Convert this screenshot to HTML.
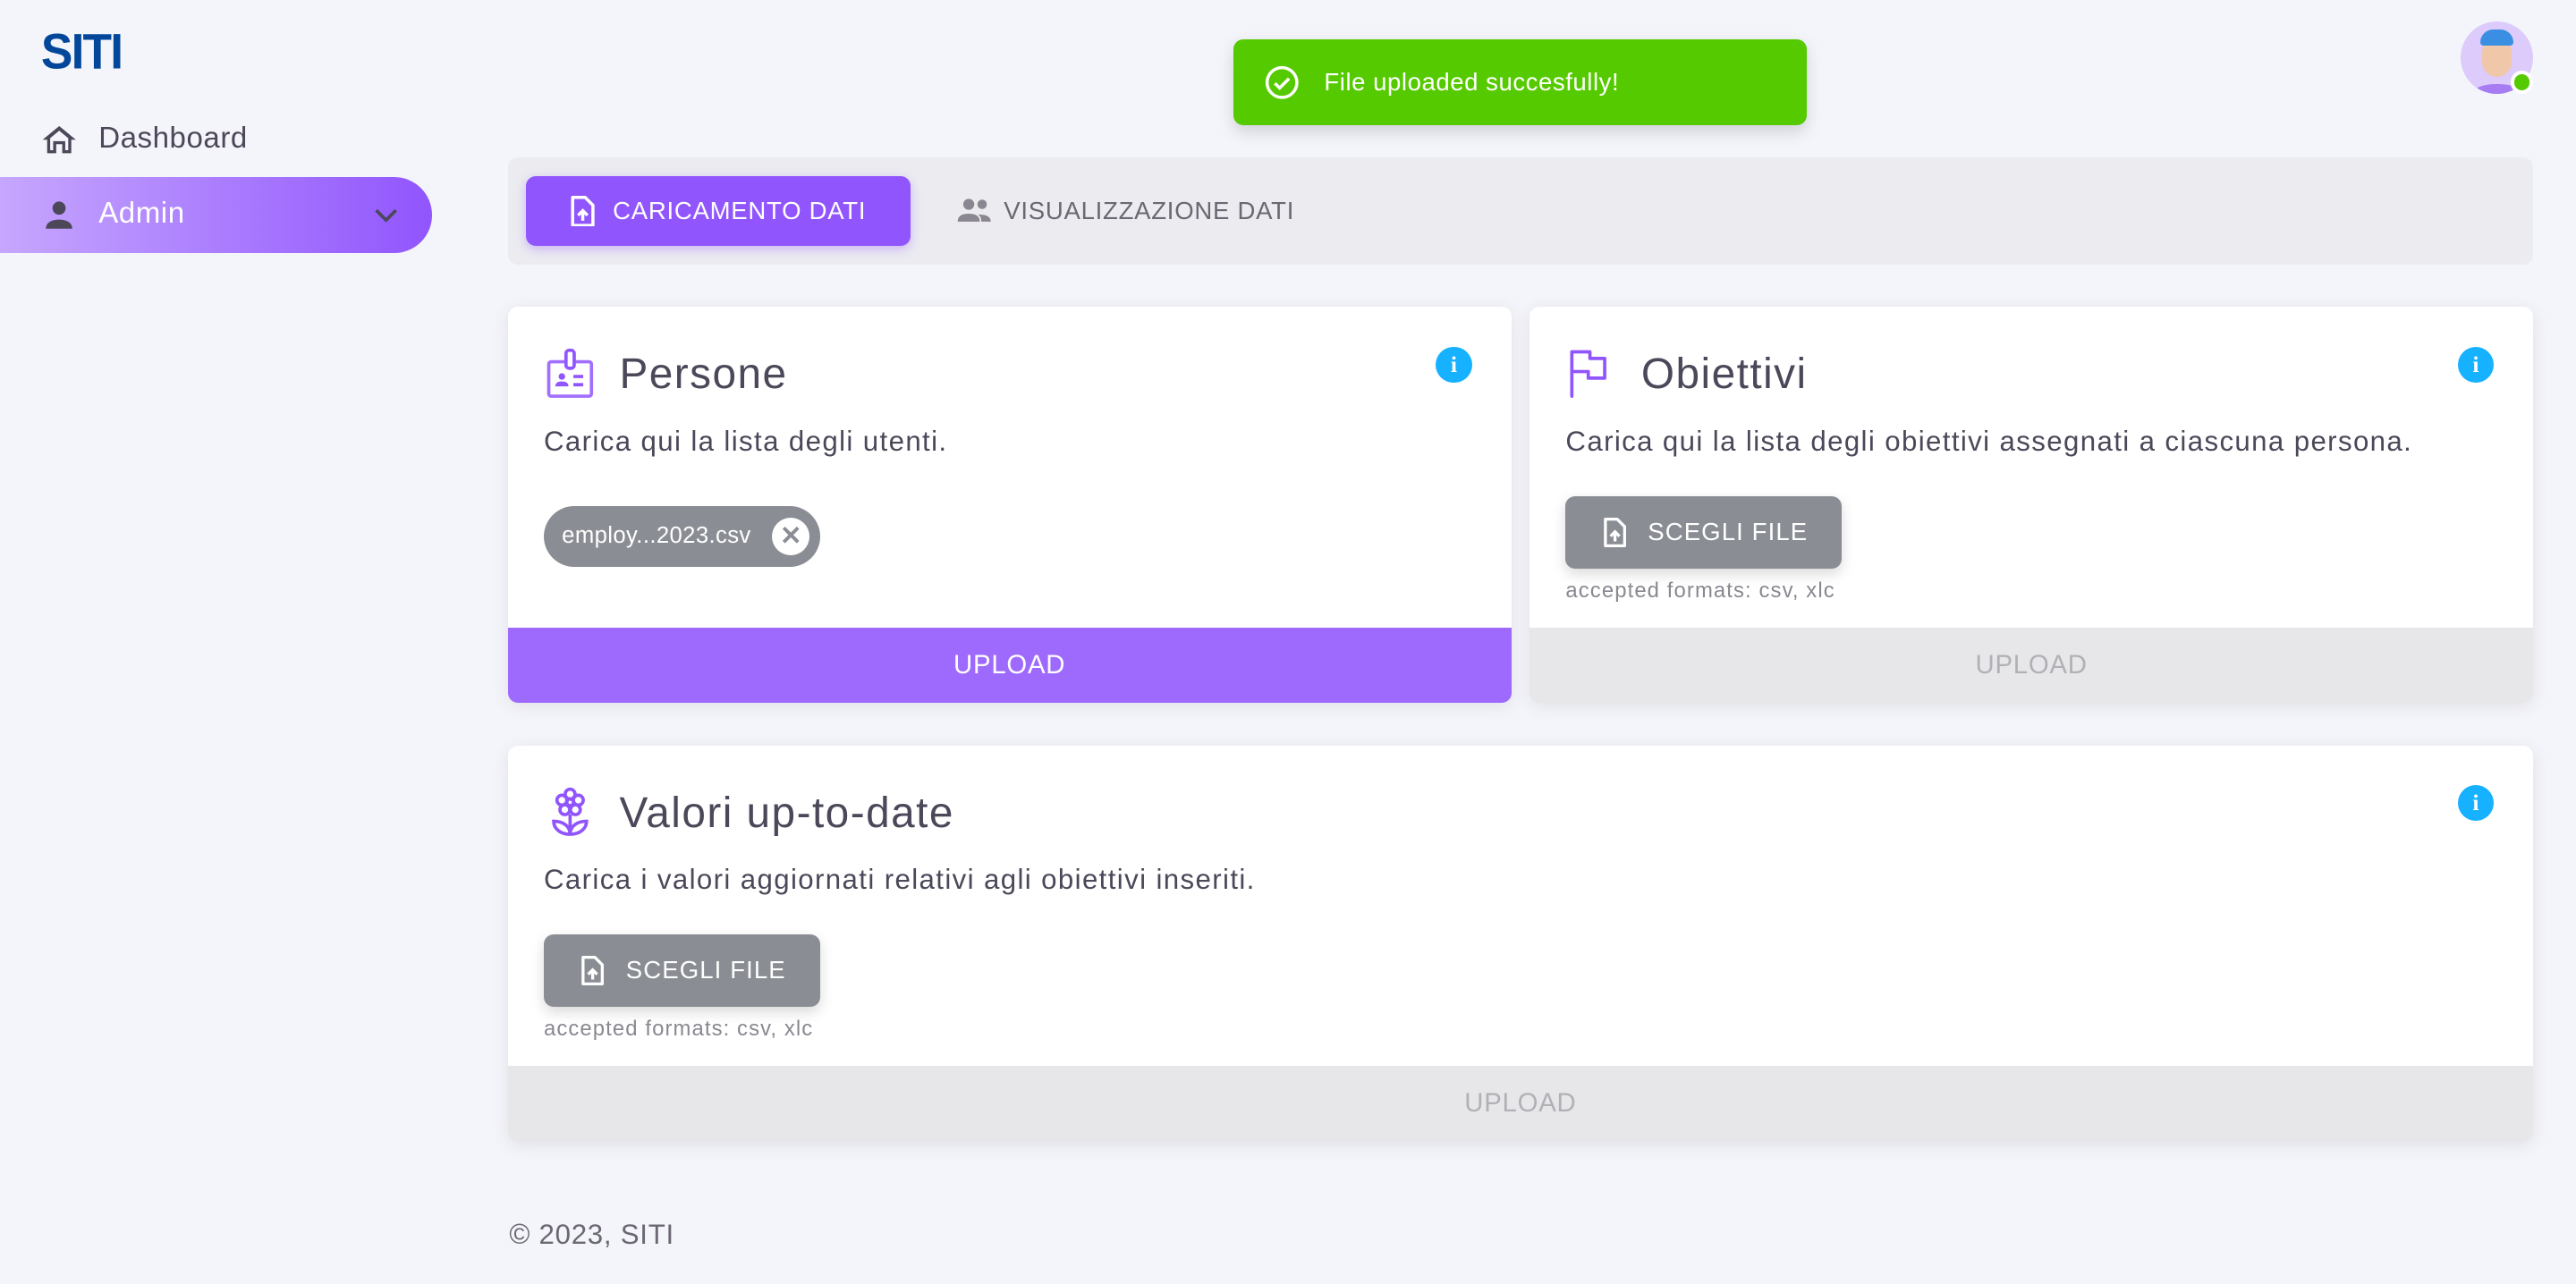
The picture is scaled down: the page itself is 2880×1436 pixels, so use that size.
<!DOCTYPE html>
<html><head><meta charset="utf-8"><style>
*{box-sizing:border-box;margin:0;padding:0}
html,body{width:2880px;height:1436px;overflow:hidden;background:#f4f5fa}
#w{zoom:1.836735;width:1568px;height:782px;position:relative;font-family:"Liberation Sans",sans-serif;color:#4c4759}
.abs{position:absolute}
.card{position:absolute;background:#fff;border-radius:6px;box-shadow:0 2px 10px rgba(58,53,65,.1);overflow:hidden}
.ttl{position:absolute;left:68px;top:26px;font-size:26px;color:#4c4759;letter-spacing:.8px}
.ico{position:absolute;left:22px;top:24px}
.desc{position:absolute;left:22px;top:72px;font-size:17px;color:#4c4759;letter-spacing:.75px}
.info{position:absolute;right:24px;top:24px;width:22px;height:22px;border-radius:50%;background:#16b1ff;color:#fff;font:bold 14px "Liberation Serif",serif;text-align:center;line-height:22px}
.up{position:absolute;left:0;right:0;bottom:0;height:46px;text-align:center;line-height:46px;font-size:16px;letter-spacing:.4px}
.btn{position:absolute;left:22px;top:115px;width:168px;height:44px;border-radius:6px;background:#8a8d93;color:#fff;font-size:15px;letter-spacing:.6px;box-shadow:0 3px 8px rgba(0,0,0,.15);line-height:44px;padding-left:50px}
.btn svg{position:absolute;left:22px;top:13px}
.acc{position:absolute;left:22px;top:165px;font-size:13px;color:#8a8790;letter-spacing:.6px}
</style></head><body><div id="w">
<div class="abs" style="left:25px;top:14px;font:900 29px 'Liberation Sans',sans-serif;color:#03479a;letter-spacing:-1px;transform:scaleY(1.05);transform-origin:top left">SITI</div>
<svg class="abs" style="left:25px;top:74px" width="22" height="22" viewBox="0 0 24 24"><path d="M12 3L1 12h3v9h6v-6h4v6h6v-9h3z M6 19v-8l6-5 6 5v8h-2v-6H8v6z" fill="#4c4759" fill-rule="evenodd"/></svg>
<div class="abs" style="left:60px;top:74px;font-size:18px;letter-spacing:.3px">Dashboard</div>
<div class="abs" style="left:0;top:108px;width:263px;height:46px;border-radius:0 23px 23px 0;background:linear-gradient(90deg,#c6a7fe,#9155fd)"></div>
<svg class="abs" style="left:24px;top:119px" width="24" height="24" viewBox="0 0 24 24"><circle cx="12" cy="7.5" r="4" fill="#4c4759"/><path d="M4 20c0-4 4-5.5 8-5.5s8 1.5 8 5.5z" fill="#4c4759"/></svg>
<div class="abs" style="left:60px;top:120px;font-size:18px;color:#fff;letter-spacing:.3px">Admin</div>
<svg class="abs" style="left:227px;top:123px" width="16" height="16" viewBox="0 0 16 16"><path d="M2 5l6 6 6-6" stroke="#4c4759" stroke-width="2" fill="none"/></svg>
<div class="abs" style="left:751px;top:24px;width:349px;height:52px;border-radius:6px;background:#56ca00;box-shadow:0 4px 10px rgba(0,0,0,.15);color:#fff;font-size:15px;line-height:52px;padding-left:55px;letter-spacing:.3px">File uploaded succesfully!
<svg class="abs" style="left:19px;top:16px" width="21" height="21" viewBox="0 0 22 22"><circle cx="11" cy="11" r="9.5" stroke="#fff" stroke-width="2" fill="none"/><path d="M6.5 11.5l3 3 6-6" stroke="#fff" stroke-width="2" fill="none"/></svg></div>
<div class="abs" style="left:1498px;top:13px;width:44px;height:44px;border-radius:50%;background:#dccbfb;overflow:hidden">
<div class="abs" style="left:13px;top:10px;width:18px;height:24px;border-radius:9px;background:#f0c7a8"></div>
<div class="abs" style="left:12px;top:5px;width:20px;height:10px;border-radius:8px 8px 2px 2px;background:#3b8fe3"></div>
<div class="abs" style="left:8px;top:38px;width:28px;height:10px;border-radius:50%;background:#a77cf3"></div></div>
<div class="abs" style="left:1528px;top:43px;width:14px;height:14px;border-radius:50%;background:#56ca00;border:2.5px solid #fff"></div>
<div class="abs" style="left:309px;top:96px;width:1233px;height:65px;border-radius:6px;background:#ebebf0"></div>
<div class="abs" style="left:320px;top:107px;width:234px;height:43px;border-radius:6px;background:#9155fd;box-shadow:0 2px 6px rgba(145,85,253,.35);color:#fff;font-size:15px;line-height:43px;padding-left:53px;letter-spacing:.4px">CARICAMENTO DATI
<svg class="abs" style="left:26px;top:12px" width="16" height="19" viewBox="0 0 16 20"><path d="M2 1h8l5 5v13H2z" stroke="#fff" stroke-width="2" fill="none" stroke-linejoin="round"/><path d="M8.5 16v-6M5.5 12.5l3-3 3 3" stroke="#fff" stroke-width="2" fill="none"/></svg></div>
<svg class="abs" style="left:582px;top:119px" width="23" height="18" viewBox="0 0 24 18"><circle cx="8" cy="5" r="3.5" fill="#8a8790"/><circle cx="16.5" cy="5" r="3" fill="#8a8790"/><path d="M1 16c0-4 3.5-5 7-5s7 1 7 5z M16 16c0-2-.5-3.5-2-4.5 4 0 8 .8 8 4.5z" fill="#8a8790"/></svg>
<div class="abs" style="left:611px;top:120px;font-size:15px;color:#6b6773;letter-spacing:.4px">VISUALIZZAZIONE DATI</div>

<div class="card" style="left:309px;top:187px;width:611px;height:241px">
<svg class="ico" width="32" height="32" viewBox="0 0 32 32"><rect x="3" y="9" width="26" height="21" rx="1.5" stroke="#9155fd" stroke-width="2" fill="none" opacity=".85"/><rect x="13.5" y="2" width="5" height="11" rx="2" stroke="#9155fd" stroke-width="2" fill="#fff"/><circle cx="11" cy="18" r="2" fill="#9155fd"/><path d="M7 24c0-2.5 2-3 4-3s4 .5 4 3z" fill="#9155fd"/><path d="M18 18h6M18 23h6" stroke="#9155fd" stroke-width="2"/></svg>
<div class="ttl">Persone</div><div class="info">i</div>
<div class="desc">Carica qui la lista degli utenti.</div>
<div class="abs" style="left:22px;top:121px;width:168px;height:37px;border-radius:19px;background:#8a8d93;color:#fff;font-size:14px;line-height:37px;padding-left:11px;letter-spacing:.2px">employ...2023.csv
<div class="abs" style="left:139px;top:7px;width:23px;height:23px;border-radius:50%;background:#fff;color:#8a8d93;text-align:center;font:bold 16px/23px 'Liberation Sans',sans-serif">✕</div></div>
<div class="up" style="background:#9e69fd;color:#fff">UPLOAD</div></div>

<div class="card" style="left:931px;top:187px;width:611px;height:241px">
<svg class="ico" width="30" height="32" viewBox="0 0 30 32"><path d="M4 30V3h11v4h9v12H14v-4H4" stroke="#9155fd" stroke-width="2" fill="none" stroke-linejoin="round" stroke-linecap="round"/></svg>
<div class="ttl">Obiettivi</div><div class="info">i</div>
<div class="desc">Carica qui la lista degli obiettivi assegnati a ciascuna persona.</div>
<div class="btn"><svg width="15" height="18" viewBox="0 0 16 20"><path d="M2 1h8l5 5v13H2z" stroke="#fff" stroke-width="2" fill="none" stroke-linejoin="round"/><path d="M8.5 16v-6M5.5 12.5l3-3 3 3" stroke="#fff" stroke-width="2" fill="none"/></svg>SCEGLI FILE</div>
<div class="acc">accepted formats: csv, xlc</div>
<div class="up" style="background:#e7e7e9;color:#b2b0b6">UPLOAD</div></div>

<div class="card" style="left:309px;top:454px;width:1233px;height:241px">
<svg class="ico" width="32" height="32" viewBox="0 0 32 32" fill="none" stroke="#9155fd" stroke-width="2"><circle cx="16" cy="5.5" r="3"/><circle cx="21" cy="9.2" r="3"/><circle cx="19.2" cy="15" r="3"/><circle cx="12.8" cy="15" r="3"/><circle cx="11" cy="9.2" r="3"/><circle cx="16" cy="10.5" r="2" fill="#fff"/><path d="M16 30c-6 0-10-3.5-10-8 5 0 10 2.5 10 8zM16 30c6 0 10-3.5 10-8-5 0-10 2.5-10 8zM16 18v12"/></svg>
<div class="ttl">Valori up-to-date</div><div class="info">i</div>
<div class="desc">Carica i valori aggiornati relativi agli obiettivi inseriti.</div>
<div class="btn"><svg width="15" height="18" viewBox="0 0 16 20"><path d="M2 1h8l5 5v13H2z" stroke="#fff" stroke-width="2" fill="none" stroke-linejoin="round"/><path d="M8.5 16v-6M5.5 12.5l3-3 3 3" stroke="#fff" stroke-width="2" fill="none"/></svg>SCEGLI FILE</div>
<div class="acc">accepted formats: csv, xlc</div>
<div class="up" style="background:#e7e7e9;color:#b2b0b6">UPLOAD</div></div>

<div class="abs" style="left:310px;top:742px;font-size:17px;color:#6b6773;letter-spacing:.4px">© 2023, SITI</div>
</div></body></html>
